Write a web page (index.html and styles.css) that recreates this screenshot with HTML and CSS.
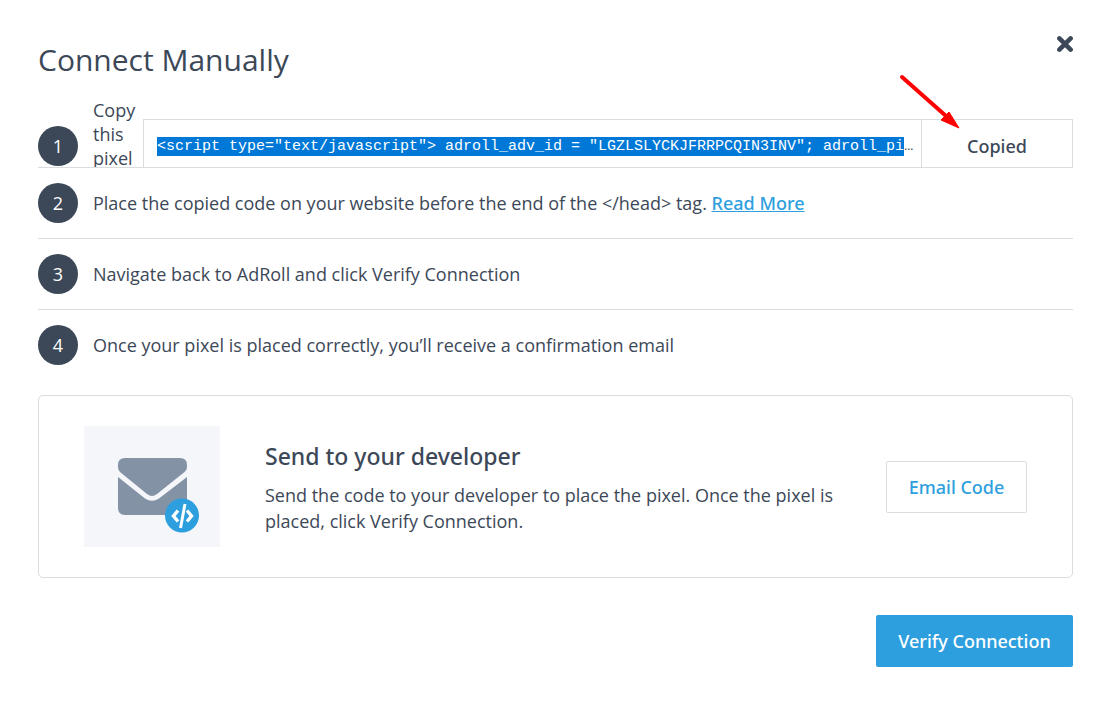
FILE: index.html
```html
<!DOCTYPE html>
<html lang="en">
<head>
  <meta charset="UTF-8">
  <meta name="viewport" content="width=device-width, initial-scale=1.0">
  <title>Connect Manually</title>
  <link rel="stylesheet" href="styles.css">
</head>
<body>
<main class="dialog">
  <header class="dialog-header">
    <h1>Connect Manually</h1>
    <button class="close-btn" type="button" aria-label="Close">
      <svg width="16" height="18" viewBox="1 0 16 18"><path d="M3.4 3.400L14.600 14.600M14.600 3.400L3.400 14.600" stroke="#3c4858" stroke-width="4.600" stroke-linecap="round"/></svg>
    </button>
  </header>

  <ol class="steps">
    <li class="step step-copy">
      <span class="number">1</span>
      <span class="copy-label">Copy this pixel</span>
      <div class="pixel">
        <code class="pixel-code"><span class="selected">&lt;script type="text/javascript"&gt; adroll_adv_id = "LGZLSLYCKJFRRPCQIN3INV"; adroll_pi</span>…</code>
        <button class="copy-btn" type="button">Copied</button>
        <svg class="arrow" width="62" height="56" viewBox="0 0 62 56"><path d="M3 3L47 42" stroke="#f00" stroke-width="4" stroke-linecap="round"/><path d="M60 54L50 38L47 41L42 46Z" fill="#f00" stroke="#f00" stroke-width="1"/></svg>
      </div>
    </li>
    <li class="step">
      <span class="number">2</span>
      <p>Place the copied code on your website before the end of the &lt;/head&gt; tag. <a href="#">Read More</a></p>
    </li>
    <li class="step">
      <span class="number">3</span>
      <p>Navigate back to AdRoll and click Verify Connection</p>
    </li>
    <li class="step">
      <span class="number">4</span>
      <p>Once your pixel is placed correctly, you’ll receive a confirmation email</p>
    </li>
  </ol>

  <section class="developer">
    <svg class="mail" width="136" height="121" viewBox="0 0 136 121">
      <rect width="136" height="121" fill="#f4f6fa"/>
      <path d="M41 32H96Q103 32 103 39V41Q103 44 100.500 46L73 68Q68 72 63 68L36 46Q34 44 34 41V39Q34 32 41 32Z" fill="#8492a6"/>
      <path d="M34 51L61 72.500Q68 77 75 72.500L103 51V82Q103 89 96 89H41Q34 89 34 82Z" fill="#8492a6"/>
      <circle cx="98" cy="89.500" r="17" fill="#2d9fde"/>
      <path d="M94 84.500L89.500 90L94 95.500M103 84.500L107.500 90L103 95.500" fill="none" stroke="#fff" stroke-width="3.400"/>
      <path d="M101 78L96.500 102" stroke="#fff" stroke-width="3"/>
    </svg>
    <div class="developer-text">
      <h2>Send to your developer</h2>
      <p>Send the code to your developer to place the pixel. Once the pixel is placed, click Verify Connection.</p>
    </div>
    <button class="email-btn" type="button">Email Code</button>
  </section>

  <footer class="dialog-footer">
    <button class="verify-btn" type="button">Verify Connection</button>
  </footer>
</main>
</body>
</html>
```
FILE: styles.css
```css
* {
  box-sizing: border-box;
}

body {
  margin: 0;
  background: #fff;
  color: #3c4858;
  font-family: "Open Sans", "Noto Sans", sans-serif;
  font-size: 18px;
  line-height: 24px;
}

h1, h2, p {
  margin: 0;
}

h2, button, .step a {
  font-family: "Noto Sans", "Open Sans", sans-serif;
  font-weight: 500;
}

button {
  font-size: 18px;
  line-height: 24px;
  cursor: pointer;
}

.dialog {
  padding: 32px 33px 40px 38px;
}

.dialog-header {
  display: flex;
  justify-content: space-between;
  align-items: flex-start;
  height: 65px;
}

h1 {
  font-size: 30px;
  font-weight: 400;
  line-height: 56px;
}

.close-btn {
  display: flex;
  margin-top: 3px;
  padding: 0;
  border: 0;
  background: none;
}

.steps {
  margin: 0;
  padding: 0;
  list-style: none;
}

.step {
  display: flex;
  align-items: center;
  gap: 15px;
  height: 71px;
  border-bottom: 1px solid #dadce0;
}

.step:last-child {
  height: 70px;
  border-bottom: 0;
}

.number {
  flex: none;
  width: 40px;
  height: 40px;
  border-radius: 50%;
  background: #3c4858;
  color: #fff;
  line-height: 40px;
  text-align: center;
}

.step a {
  color: #2d9fde;
}

.step-copy {
  align-items: flex-end;
}

.step-copy .number {
  margin-bottom: 1px;
}

/* the last line of the label is cut off by the row */
.copy-label {
  flex: none;
  width: 50px;
  height: 69px;
  margin-right: -15px;
  overflow: hidden;
}

.pixel {
  position: relative;
  display: flex;
  flex: 1;
  min-width: 0;
  height: 49px;
  margin-bottom: -1px;
  border: 1px solid #dadce0;
}

.pixel-code {
  flex: 1;
  min-width: 0;
  padding: 0 0 0 13px;
  overflow: hidden;
  font-family: "Liberation Mono", monospace;
  font-size: 15px;
  line-height: 54px;
  white-space: nowrap;
}

.selected {
  padding: 1px 0;
  background: #0078d7;
  color: #fff;
}

.copy-btn {
  flex: none;
  width: 151px;
  padding: 4px 0 0;
  border: 0;
  border-left: 1px solid #dadce0;
  background: #fff;
  color: #3c4858;
}

.arrow {
  position: absolute;
  top: -46px;
  right: 111px;
}

.developer {
  display: flex;
  align-items: center;
  gap: 45px;
  margin-top: 15px;
  padding: 30px 45px;
  border: 1px solid #dadce0;
  border-radius: 5px;
}

.mail {
  flex: none;
}

.developer-text {
  flex: 1;
}

h2 {
  margin-bottom: 10px;
  font-size: 23px;
  line-height: 32px;
}

.developer-text p {
  max-width: 570px;
  line-height: 26px;
}

.email-btn {
  width: 141px;
  height: 52px;
  border: 1px solid #dadce0;
  border-radius: 2px;
  background: #fff;
  color: #2d9fde;
}

.dialog-footer {
  display: flex;
  justify-content: flex-end;
  margin-top: 37px;
}

.verify-btn {
  width: 197px;
  height: 52px;
  border: 0;
  border-radius: 2px;
  background: #2d9fde;
  color: #fff;
}
```
